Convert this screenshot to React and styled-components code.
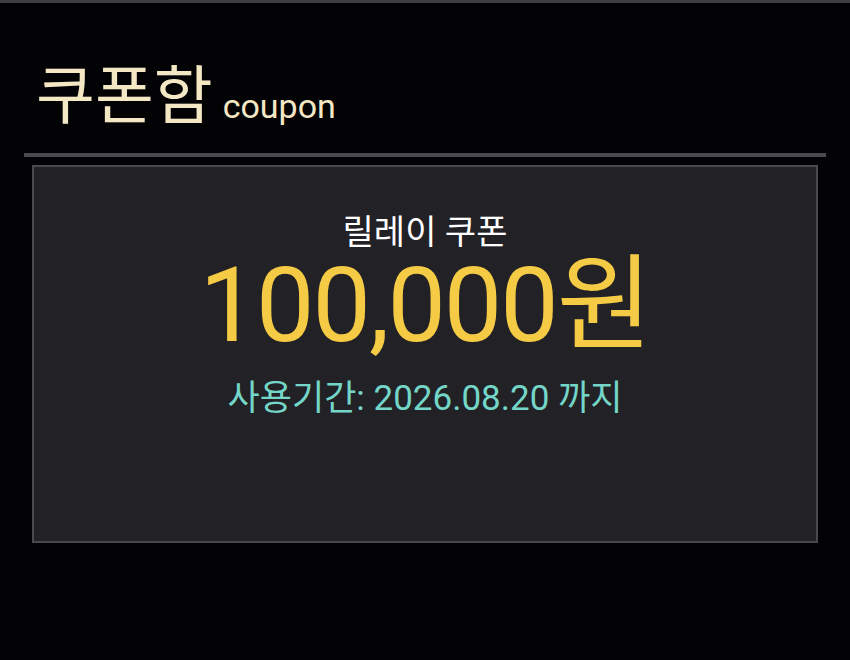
import React from 'react';
import styled, { createGlobalStyle } from 'styled-components';

const GlobalStyle = createGlobalStyle`
  html, body {
    margin: 0;
    padding: 0;
    background: #030205;
  }
  body {
    font-family: Roboto, "Noto Sans CJK KR", sans-serif;
  }
`;

const Page = styled.div`
  width: 850px;
  height: 660px;
  background: #030205;
  border-top: 3px solid #3e3e42;
  box-sizing: border-box;
`;

const Header = styled.header`
  display: flex;
  align-items: baseline;
  gap: 10px;
  padding: 62px 0 0 36px;
  height: 150px;
  box-sizing: border-box;
  color: #f4e8c4;
`;

const Title = styled.h1`
  margin: 0;
  font-size: 64px;
  font-weight: 400;
  line-height: 1;
`;

const Sub = styled.span`
  font-size: 34px;
  line-height: 1;
`;

const Divider = styled.hr`
  margin: 0 24px;
  height: 4px;
  border: 0;
  background: #4a4a4e;
`;

const Card = styled.section`
  margin: 8px 32px 0;
  height: 378px;
  box-sizing: border-box;
  background: #222226;
  border: 2px solid #4a4a4e;
  display: flex;
  flex-direction: column;
  align-items: center;
  padding-top: 47px;
`;

const Name = styled.div`
  color: #ffffff;
  font-size: 34px;
  line-height: 36px;
`;

const Amount = styled.div`
  color: #f5cb45;
  font-size: 104px;
  line-height: 100px;
  letter-spacing: -2px;
  margin-top: 6px;
`;

const Expire = styled.div`
  color: #74d6c9;
  font-size: 35px;
  line-height: 40px;
  margin-top: 23px;
`;

export default function App() {
  return (
    <>
      <GlobalStyle />
      <Page>
        <Header>
          <Title>쿠폰함</Title>
          <Sub>coupon</Sub>
        </Header>
        <Divider />
        <Card>
          <Name>릴레이 쿠폰</Name>
          <Amount>100,000원</Amount>
          <Expire>사용기간: 2026.08.20 까지</Expire>
        </Card>
      </Page>
    </>
  );
}
